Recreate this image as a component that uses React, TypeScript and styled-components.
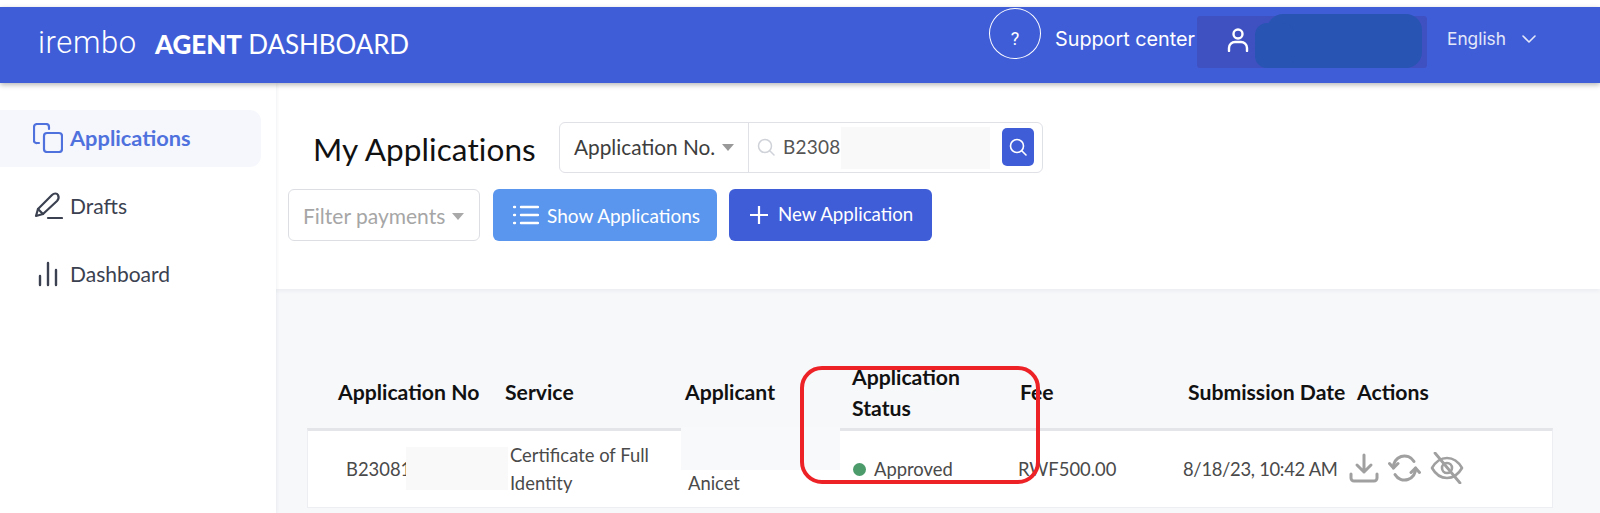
import React from "react";
import styled, { createGlobalStyle } from "styled-components";

const Global = createGlobalStyle`
  html, body { margin: 0; padding: 0; background: #fff; }
  body { font-family: "Lato", "Noto Sans", sans-serif; }
  * { box-sizing: border-box; }
`;

const Page = styled.div`
  width: 1600px; height: 513px; padding-top: 7px; overflow: hidden; background: #fff; position: relative;
`;
const Header = styled.header`
  height: 76px; background: #405dd8; display: flex; color: #fff; position: relative; z-index: 2;
  box-shadow: 0 2px 5px rgba(0,0,0,.28);
`;
const Brand = styled.div`
  display: flex; align-items: center; padding-left: 38px; width: 989px; height: 74px;
`;
const Wordmark = styled.span`
  font-family: "Roboto", sans-serif; font-weight: 300; font-size: 31px; letter-spacing: .6px; width: 117px; line-height: 1; margin-top: -3px;
`;
const BrandTitle = styled.span`
  font-family: "Lato", sans-serif; font-size: 26px; font-weight: 400; letter-spacing: -.1px;
  b { font-weight: 900; }
`;
const HelpCircle = styled.div`
  width: 52px; height: 51px; margin-top: 1px; border: 1.5px solid #fff; border-radius: 50%; display: flex; align-items: center; justify-content: center;
  font-family: "Roboto", sans-serif; font-size: 18px; padding-top: 9px;
`;
const Support = styled.span`
  font-family: "Inter", sans-serif; font-size: 19.8px; margin-left: 14px; margin-top: 20px; width: 142px; white-space: nowrap; line-height: 24px;
`;
const UserBox = styled.div`
  width: 230px; height: 52px; margin-top: 9px; background: #3f51c1; border-radius: 3px; position: relative; padding: 12px 0 0 29px;
`;
const Redact = styled.div`
  position: absolute; background: #2855b3; left: 70px; top: -2px; width: 155px; height: 54px; border-radius: 16px;
  &::before { content: ""; position: absolute; left: -12px; top: 9px; width: 40px; height: 45px; background: #2855b3; border-radius: 12px; }
`;
const Lang = styled.div`
  display: flex; align-items: flex-start; margin-left: 20px; margin-top: 21px; gap: 15px;
  font-family: "Inter", sans-serif; font-size: 17.3px; line-height: 22px; color: #e4e8f8;
  svg { margin-top: 3px; }
`;

const Body = styled.div`
  display: grid; grid-template-columns: 276px 1fr; height: 430px;
`;
const Sidebar = styled.nav`
  background: #fff; padding-top: 27px; box-shadow: 1px 0 3px rgba(40,50,80,.07); position: relative; z-index: 1;
  display: flex; flex-direction: column; align-items: flex-start;
`;
const NavItem = styled.div<{ $active?: boolean }>`
  width: 261px; height: 57px; display: flex; align-items: center; padding: 0 0 2px 33px; gap: 7px;
  font-size: ${(p) => (p.$active ? "21.8px" : "21px")}; line-height: 1;
  font-weight: ${(p) => (p.$active ? 700 : 400)};
  color: ${(p) => (p.$active ? "#4f71de" : "#3b4150")};
  background: ${(p) => (p.$active ? "#f5f7fc" : "transparent")};
  border-radius: 0 11px 11px 0;
  margin-bottom: 11px;
  svg { flex: 0 0 30px; }
`;

const Main = styled.main`
  background: #f7f8fa; display: flex; flex-direction: column;
`;
const Panel = styled.section`
  background: #fff; height: 206px; padding: 39px 0 0 12px; box-shadow: 0 2px 4px rgba(40,50,80,.06);
  display: flex; flex-direction: column; gap: 16px;
`;
const Row = styled.div`
  display: flex; align-items: center;
`;
const Title = styled.h1`
  margin: 0 0 0 25px; width: 246px; font-weight: 400; font-size: 31.5px; color: #111; letter-spacing: .1px; white-space: nowrap; padding-top: 2px;
`;
const SearchBox = styled.div`
  width: 484px; height: 51px; border: 1.5px solid #dfe1e6; border-radius: 6px; display: flex; align-items: center; position: relative;
`;
const SelectLabel = styled.div`
  width: 189px; height: 100%; border-right: 1.5px solid #dfe1e6; display: flex; align-items: center; padding: 0 0 2px 14px; font-size: 20.8px; color: #3d3d3d; gap: 7px; white-space: nowrap;
`;
const Caret = styled.span<{ $light?: boolean }>`
  width: 0; height: 0; border-left: 6px solid transparent; border-right: 6px solid transparent;
  border-top: 7px solid ${(p) => (p.$light ? "#a9a9a9" : "#999")};
  margin-top: 2px;
`;
const SearchInput = styled.div`
  flex: 1; display: flex; align-items: center; padding: 0 0 2px 8px; gap: 8px; font-size: 19px; color: #555; letter-spacing: .2px;
`;
const Blur = styled.div`
  position: absolute; left: 281px; top: 4px; width: 149px; height: 42px; background: #f9f9f9;
`;
const SearchButton = styled.div`
  position: absolute; right: 8px; top: 5px; width: 32px; height: 38px; background: #405dd8; border-radius: 5px; display: flex; align-items: center; justify-content: center;
`;
const FilterSelect = styled.div`
  width: 192px; height: 52px; margin-right: 1px; border: 1.5px solid #dcdee3; border-radius: 6px; display: flex; align-items: center; padding-left: 14px; gap: 7px; color: #a6a6a6; font-size: 21px; white-space: nowrap;
`;
const Button = styled.div<{ $bg: string; $w: number; $gap: number; $pad: number }>`
  width: ${(p) => p.$w}px; height: 52px; background: ${(p) => p.$bg}; color: #fff; border-radius: 6px; display: flex; align-items: center;
  padding-left: ${(p) => p.$pad}px; gap: ${(p) => p.$gap}px; margin-left: 12px; white-space: nowrap;
`;
const ShowLabel = styled.span`
  font-size: 19px;
`;
const NewLabel = styled.span`
  font-size: 18.7px; margin-top: -3px;
`;

const TableArea = styled.div`
  position: relative; padding: 68px 47px 0 31px;
`;
const HeadRow = styled.div`
  display: grid; grid-template-columns: 167px 180px 167px 168px 168px 169px 1fr; height: 71px; padding-left: 31px; align-items: center;
  font-weight: 700; font-size: 21.2px; line-height: 31px; color: #111; white-space: nowrap;
`;
const DataRow = styled.div`
  display: grid; grid-template-columns: 164px 178px 165px 165px 165px 167px 1fr; height: 80px; padding-left: 38px; align-items: center;
  background: #fff; border: 1px solid #eceef1; border-top: 3px solid #e3e5e9;
  font-size: 18.4px; line-height: 28px; color: #4a4a4a; white-space: nowrap;
`;
const ApplicantCell = styled.div`
  padding-top: 28px;
`;
const DateCell = styled.div`
  letter-spacing: -.3px;
`;
const Status = styled.div`
  display: flex; align-items: center; gap: 8px;
`;
const Dot = styled.span`
  width: 13px; height: 13px; border-radius: 50%; background: #4b9b6b;
`;
const Actions = styled.div`
  display: flex; align-items: center; gap: 9px; color: #a0a0a0; margin: -2px 0 0 -1px;
`;
const PatchAno = styled.div`
  position: absolute; left: 130px; top: 158px; width: 102px; height: 43px; background: #f9f9f9;
`;
const PatchApplicant = styled.div`
  position: absolute; left: 405px; top: 138px; width: 159px; height: 43px; background: #f8f9fb;
`;
const Marker = styled.div`
  position: absolute; left: 524px; top: 77px; width: 240px; height: 118px; border: 4px solid #ec2227; border-radius: 22px;
`;

const st = { fill: "none", stroke: "currentColor", strokeLinecap: "round", strokeLinejoin: "round" } as const;

export default function App() {
  return (
    <Page>
      <Global />
      <Header>
        <Brand>
          <Wordmark>irembo</Wordmark>
          <BrandTitle><b>AGENT</b> DASHBOARD</BrandTitle>
        </Brand>
        <HelpCircle>?</HelpCircle>
        <Support>Support center</Support>
        <UserBox>
          <svg width="24" height="24" viewBox="0 0 24 24" {...st} stroke="#fff" strokeWidth="2.400">
            <circle cx="12" cy="6" r="4.500" />
            <path d="M3 23v-3c0-3.500 3-6 6-6h6c3 0 6 2.500 6 6v3" />
          </svg>
          <Redact />
        </UserBox>
        <Lang>
          English
          <svg width="16" height="16" viewBox="0 0 16 16" {...st} stroke="#e4e8f8" strokeWidth="1.600"><path d="M2 5l6 6 6-6" /></svg>
        </Lang>
      </Header>
      <Body>
        <Sidebar>
          <NavItem $active>
            <svg width="30" height="30" viewBox="0 0 30 30" {...st} strokeWidth="2.200">
              <rect x="11" y="10" width="18" height="19" rx="3" />
              <path d="M6 20H4a2.500 2.500 0 0 1-3-3V4a3 3 0 0 1 3-3h9a3 3 0 0 1 3 3v2" />
            </svg>
            Applications
          </NavItem>
          <NavItem>
            <svg width="30" height="30" viewBox="0 0 30 30" {...st} strokeWidth="2.200">
              <path d="M3 25l2-7L19 4c2-2 5-2 6 0s1 4-1 6L10 23z" />
              <path d="M5 18l5 5" />
              <path d="M15 27h14" />
            </svg>
            Drafts
          </NavItem>
          <NavItem>
            <svg width="30" height="30" viewBox="0 0 30 30" {...st} strokeWidth="2.400">
              <path d="M7 26v-9M15 26V4M23 26V11" />
            </svg>
            Dashboard
          </NavItem>
        </Sidebar>
        <Main>
          <Panel>
            <Row>
              <Title>My Applications</Title>
              <SearchBox>
                <SelectLabel>Application No.<Caret /></SelectLabel>
                <SearchInput>
                  <svg width="18" height="18" viewBox="0 0 18 18" {...st} stroke="#cfd2d8" strokeWidth="1.500"><circle cx="8" cy="8" r="6.500" /><path d="M13 13l4 4" /></svg>
                  B2308
                </SearchInput>
                <Blur />
                <SearchButton>
                  <svg width="18" height="18" viewBox="0 0 18 18" {...st} stroke="#fff" strokeWidth="1.600"><circle cx="8" cy="8" r="6.500" /><path d="M13 13l4 4" /></svg>
                </SearchButton>
              </SearchBox>
            </Row>
            <Row>
              <FilterSelect>Filter payments<Caret $light /></FilterSelect>
              <Button $bg="#5b96ee" $w={224} $gap={8} $pad={20}>
                <svg width="26" height="22" viewBox="0 0 26 22" {...st} stroke="#fff" strokeWidth="2.400">
                  <path d="M8 3h17M8 11h17M8 19h17M1 3h1M1 11h1M1 19h1" />
                </svg>
                <ShowLabel>Show Applications</ShowLabel>
              </Button>
              <Button $bg="#405dd8" $w={203} $gap={10} $pad={21}>
                <svg width="18" height="18" viewBox="0 0 18 18" {...st} stroke="#fff" strokeWidth="2.200"><path d="M9 0v18M0 9h18" /></svg>
                <NewLabel>New Application</NewLabel>
              </Button>
            </Row>
          </Panel>
          <TableArea>
            <HeadRow>
              <div>Application No</div>
              <div>Service</div>
              <div>Applicant</div>
              <div>Application<br />Status</div>
              <div>Fee</div>
              <div>Submission Date</div>
              <div>Actions</div>
            </HeadRow>
            <DataRow>
              <div>B23081</div>
              <div>Certificate of Full<br />Identity</div>
              <ApplicantCell>Anicet</ApplicantCell>
              <Status><Dot />Approved</Status>
              <div>RWF500.00</div>
              <DateCell>8/18/23, 10:42 AM</DateCell>
              <Actions>
                <svg width="30" height="30" viewBox="0 0 30 30" {...st} strokeWidth="3">
                  <path d="M15 2v17M8 12l7 7 7-7M2 21v4a3 3 0 0 0 3 3h20a3 3 0 0 0 3-3v-4" />
                </svg>
                <svg width="33" height="30" viewBox="0 0 33 30" {...st} strokeWidth="3">
                  <path d="M5.500 15A11 11 0 0 1 26 8.500M27.500 15A11 11 0 0 1 7 21.500" />
                  <path d="M1.500 10.500l4 4.500 4.500-4.500M31.500 19.500l-4-4.500-4.500 4.500" />
                </svg>
                <svg width="34" height="32" viewBox="0 0 34 32" {...st} strokeWidth="2.600">
                  <path d="M2 16c4-7 9-10 15-10s11 3 15 10c-4 7-9 10-15 10S6 23 2 16z" />
                  <circle cx="17" cy="16" r="5" />
                  <path d="M5 1l25 30" strokeWidth="2.800" />
                </svg>
              </Actions>
            </DataRow>
            <PatchAno />
            <PatchApplicant />
            <Marker />
          </TableArea>
        </Main>
      </Body>
    </Page>
  );
}
